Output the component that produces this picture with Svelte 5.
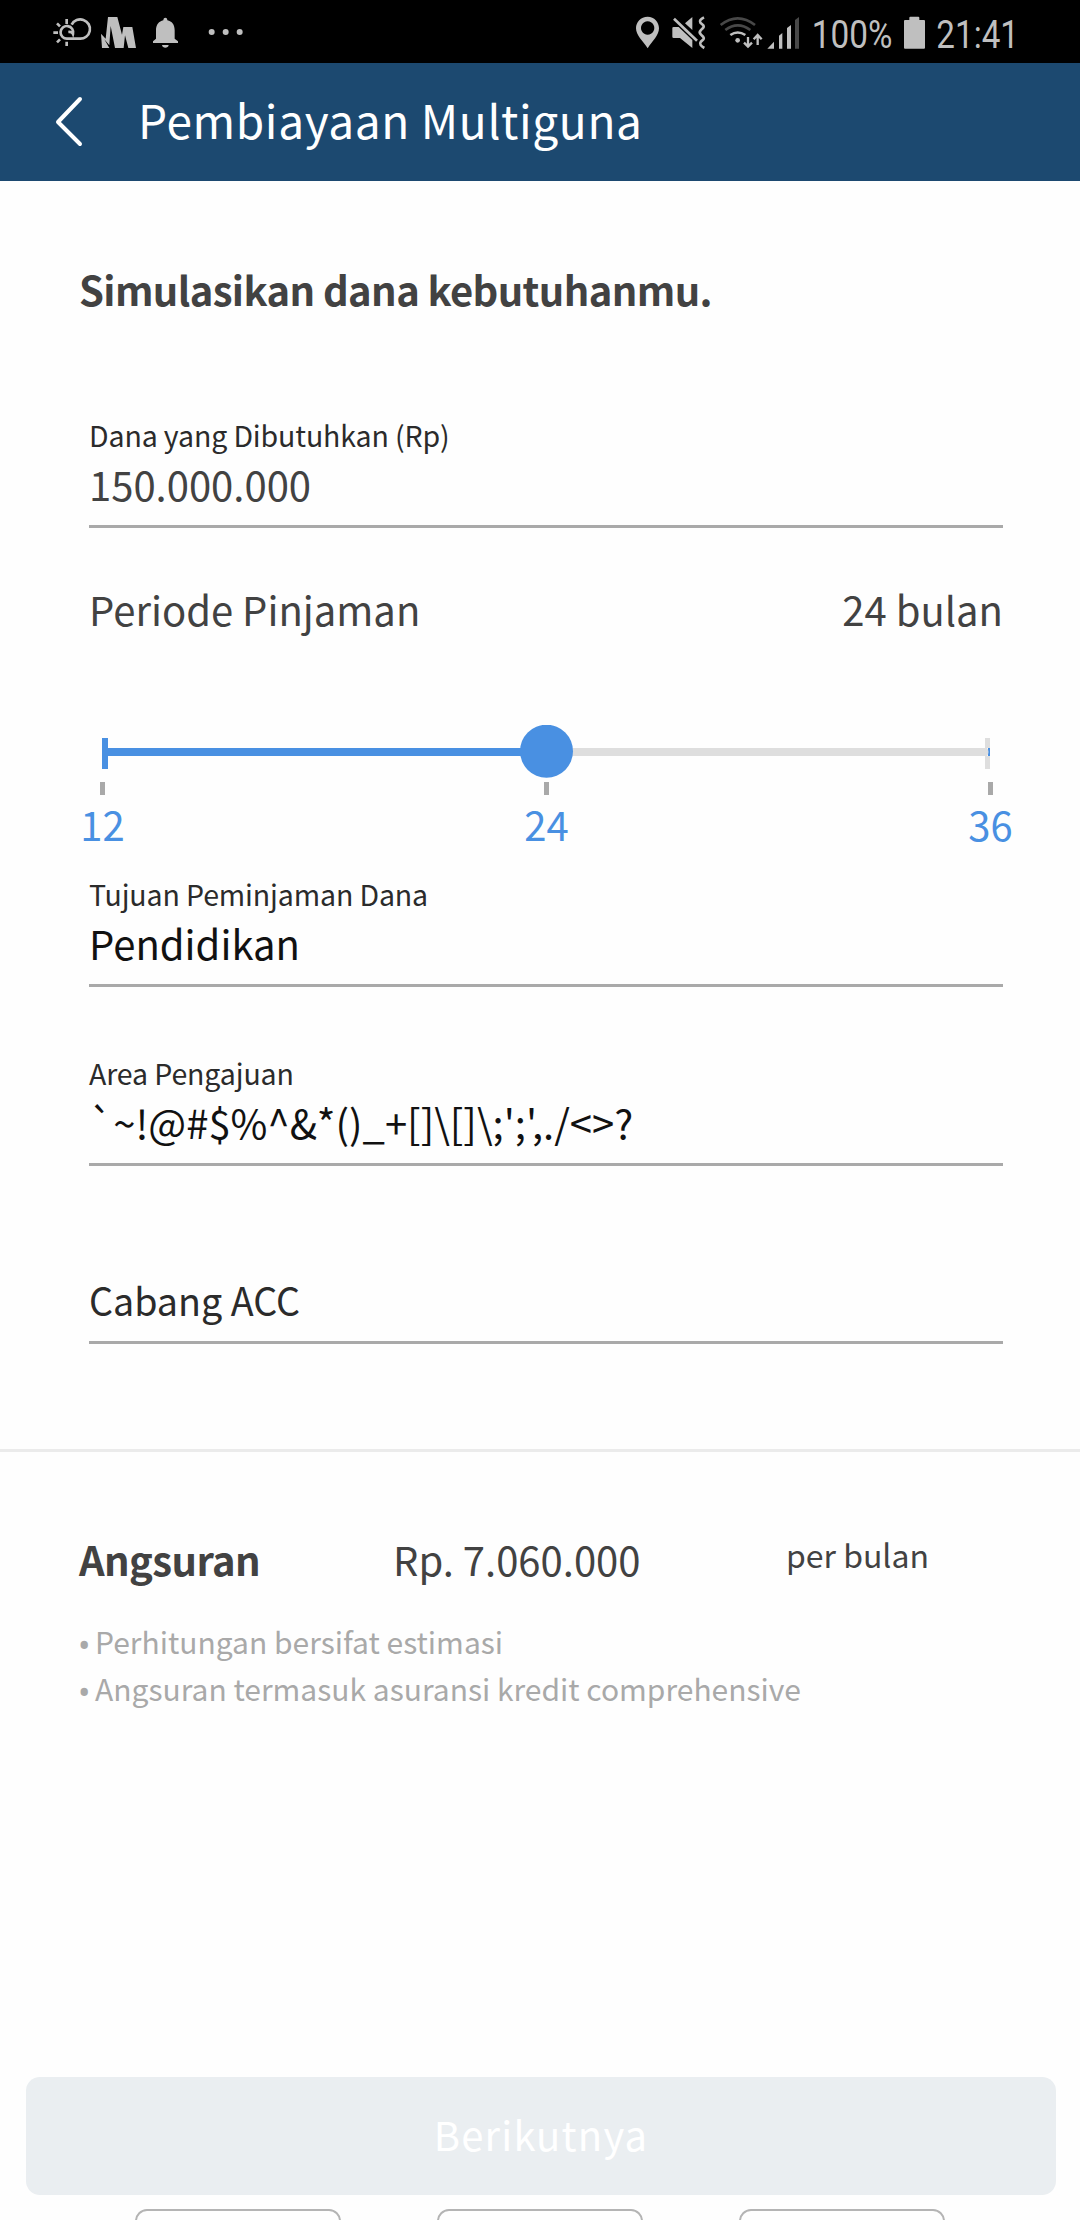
<script>
  const marks = [12, 24, 36];
  const notes = ['Perhitungan bersifat estimasi', 'Angsuran termasuk asuransi kredit comprehensive'];
</script>

<div class="screen">
  <div class="status">
    <svg width="360" height="63" viewBox="0 0 1080 189" fill="#bfbfbf">
      <g fill="none" stroke="#bfbfbf" stroke-width="8">
        <path d="M215 74 A29 29 0 1 1 239 116 H202 A19 19 0 1 1 219 102 Q216 95 205 96" />
        <path d="M200 57V72M160 98H174M200 125V138M171 70L180 79M171 127L180 118" />
      </g>
      <path d="M303 101 L317 116 L324 51 H352 L366 104 L370 81 H397 L408 144 H385 L375 106 L371 144 H345 L332 78 L328 136 L313 118 L328 144 H306 Z" />
      <path d="M459 129 V124 L468 116 V91 C468 74 477 64 490 61 C490 51 502 51 502 61 C516 64 524 74 524 91 V116 L534 124 V129 Z M486 135 H506 C505 146 487 146 486 135 Z" />
      <circle cx="635" cy="96" r="9" /><circle cx="677" cy="96" r="9" /><circle cx="719" cy="96" r="9" />
    </svg>
    <svg width="480" height="63" viewBox="0 0 1440 189" fill="#bfbfbf">
      <path fill-rule="evenodd" d="M143 50 C122 50 108 66 108 85 C108 106 129 123 143 145 C157 123 177 106 177 85 C177 66 163 50 143 50 Z M143 64 A20 20 0 1 1 142.900 64 Z" />
      <path d="M217 84 Q217 81 221 81 H236 L277 120 V144 L240 114 H221 Q217 114 217 110 Z M255 70 L277 51 V90 Z" />
      <path d="M222 56 L291 122" stroke="#bfbfbf" stroke-width="8" />
      <path d="M312 52 Q296 60 301 68 L310 76 Q313 81 307 86 L302 91 Q296 97 303 104 L310 111 Q314 116 307 121 L302 126 Q296 134 313 144" fill="none" stroke="#bfbfbf" stroke-width="8" />
      <g fill="none" stroke-width="8">
        <path d="M362 75 Q413 35 465 75" stroke="#484848" />
        <path d="M376 90 Q413 62 451 90" stroke="#484848" />
        <path d="M391 105 Q413 90 436 105" stroke="#bfbfbf" />
        <path d="M444 111V139M432 128L444 140L456 128M473 135V106M461 118L473 105L485 118" stroke="#bfbfbf" stroke-width="7" />
      </g>
      <circle cx="413" cy="121" r="7" />
      <path d="M502 146 L522 125 V146 Z M537 146 V107 L547 99 V146 Z M561 146 V84 L573 75 V146 Z" />
      <path d="M585 146 V60 L597 51 V146 Z" fill="#484848" />
      <text class="clock" x="635" y="144" textLength="242" lengthAdjust="spacingAndGlyphs">100%</text>
      <path d="M912 63 Q912 60 915 60 H928 V53 Q928 50 931 50 H955 Q958 50 958 53 V60 H972 Q975 60 975 63 V143 Q975 146 972 146 H915 Q912 146 912 143 Z" />
      <text class="clock" x="1009" y="144" textLength="248" lengthAdjust="spacingAndGlyphs">21:41</text>
    </svg>
  </div>

  <header>
    <svg class="back" width="28" height="52" viewBox="0 0 28 52"><path d="M25 3 L3 26 L25 48" fill="none" stroke="#fff" stroke-width="4" stroke-linecap="round" stroke-linejoin="round" /></svg>
    <h1>Pembiayaan Multiguna</h1>
  </header>

  <main>
    <h2>Simulasikan dana kebutuhanmu.</h2>
    <div class="field amount">
      <div class="label">Dana yang Dibutuhkan (Rp)</div>
      <div class="value soft">150.000.000</div>
    </div>
    <div class="period"><span>Periode Pinjaman</span><span>24 bulan</span></div>
    <div class="slider">
      <svg width="894" height="72" viewBox="0 0 894 72">
        <path d="M888 23h2v8h-2z" fill="#4990e2" />
        <path d="M885 13h5v10h-5zM885 31h5v13h-5z" fill="#dedede" />
        <path d="M446 23H887Q890 27 887 31H446z" fill="#dedede" />
        <path d="M2 13h6v10H446v8H8v13H2z" fill="#4990e2" />
        <circle cx="446.500" cy="26.200" r="26.500" fill="#4990e2" />
        <path d="M0 57h5v13H0zM444 57h5v13h-5zM888 57h5v13h-5z" fill="#a9a9a9" />
      </svg>
    </div>
    <div class="marks">
      {#each marks as m}<span>{m}</span>{/each}
    </div>
    <div class="field purpose">
      <div class="label">Tujuan Peminjaman Dana</div>
      <div class="value">Pendidikan</div>
    </div>
    <div class="field area">
      <div class="label">Area Pengajuan</div>
      <div class="value">{"`~!@#$%^&*()_+[]\\[]\\;';',./<>?"}</div>
    </div>
    <div class="field branch">
      <div class="value">Cabang ACC</div>
    </div>
  </main>

  <section>
    <div class="result">
      <strong>Angsuran</strong>
      <span class="sum">Rp. 7.060.000</span>
      <span class="per">per bulan</span>
    </div>
    <ul>
      {#each notes as note}<li><span class="dot">•</span>{note}</li>{/each}
    </ul>
  </section>

  <button>Berikutnya</button>
  <div class="tabs"><i></i><i></i><i></i></div>
</div>

<style>
  :global(body) { margin: 0; background: #fefefe; }
  .screen {
    width: 1080px; height: 2220px; overflow: hidden; box-sizing: border-box;
    display: flex; flex-direction: column; background: #fefefe; color: #424242;
    font-family: "Noto Sans CJK SC", "Noto Sans", sans-serif; font-size: 40px;
  }
  .screen > * { flex-shrink: 0; }
  .status { height: 63px; background: #000; display: flex; }
  .status svg:last-child { margin-left: 240px; }
  .clock { font-family: Roboto, sans-serif; font-size: 118px; }
  header { height: 118px; background: #1c4970; display: flex; align-items: center; color: #fff; }
  .back { margin-left: 55px; }
  h1 { margin: 0 0 0 55px; font-size: 46px; font-weight: 400; line-height: 112px; height: 118px; letter-spacing: .62px; white-space: nowrap; }
  main { height: 1268px; border-bottom: 3px solid #ebebeb; box-sizing: content-box; padding: 0 77px 0 89px; }
  h2 { margin: 78px 0 0 -10px; height: 61px; line-height: 60px; font-size: 40px; font-weight: 700; letter-spacing: -.62px; white-space: nowrap; }
  .field { border-bottom: 3px solid #a9a9a9; display: flex; flex-direction: column; justify-content: flex-end; box-sizing: border-box; white-space: nowrap; }
  .label { font-size: 28.5px; letter-spacing: -.12px; line-height: 36px; height: 37px; color: #2b2b2b; }
  .value { line-height: 60px; height: 60px; padding-bottom: 11px; color: #111; }
  .soft { color: #424242; }
  .amount { height: 208px; }
  .period { height: 60px; margin-top: 51px; display: flex; justify-content: space-between; line-height: 60px; }
  .slider { height: 72px; margin: 86px 0 0 11px; }
  .slider svg { display: block; }
  .marks { height: 60px; margin: -3px -38px 0 -37px; display: flex; justify-content: space-between; line-height: 60px; color: #4990e2; }
  .marks span { width: 101px; text-align: center; }
  .purpose { height: 133px; }
  .area { height: 179px; }
  .branch { height: 178px; }
  .branch .value { color: #2b2b2b; font-size: 39px; padding-bottom: 12px; transform: scaleX(.965); transform-origin: left; }
  section { height: 625px; padding: 77px 79px 0; box-sizing: border-box; }
  .result { height: 60px; display: flex; line-height: 60px; white-space: nowrap; }
  strong { width: 314px; font-weight: 700; letter-spacing: -.6px; }
  .sum { width: 393px; }
  .per { font-size: 32px; line-height: 50px; }
  ul { list-style: none; margin: 29px 0 0; padding: 0; color: #a9a9a9; font-size: 30px; line-height: 47px; }
  li { display: flex; height: 47px; white-space: nowrap; }
  .dot { width: 16px; margin-left: -1px; margin-right: 1px; padding-top: 3px; font-size: 33px; font-family: "Noto Sans", sans-serif; }
  button { width: 1030px; height: 118px; margin-left: 26px; border: 0; border-radius: 14px; padding: 0 0 4px; background: #eaeef1; color: #fff; font: inherit; line-height: 114px; letter-spacing: 1.2px; }
  .tabs { height: 11px; margin-top: 14px; padding: 0 135px; display: flex; justify-content: space-between; overflow: hidden; }
  .tabs i { width: 206px; height: 90px; box-sizing: border-box; border: 2px solid #b4b4b4; border-radius: 12px; }
</style>
